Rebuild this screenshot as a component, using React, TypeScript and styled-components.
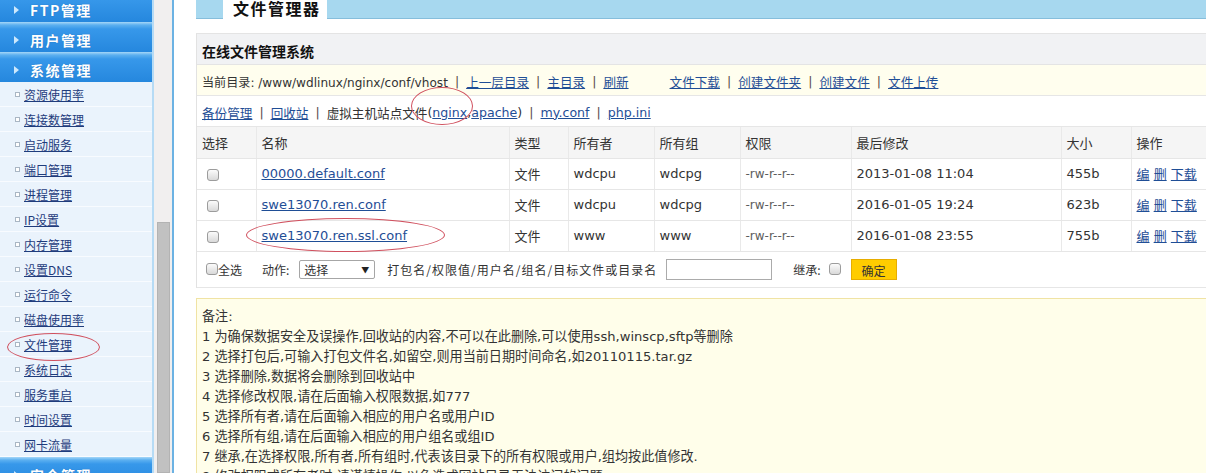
import React from "react";
import styled, { createGlobalStyle, css } from "styled-components";

const FONT = `"DejaVu Sans", "Noto Sans CJK SC", sans-serif`;
const CJK = `"Noto Sans CJK SC", sans-serif`;

const GlobalStyle = createGlobalStyle`
  html, body { margin: 0; padding: 0; height: 473px; overflow: hidden; background: #fff; }
  body { font-family: ${FONT}; font-size: 12px; color: #333; }
  * { box-sizing: border-box; }
`;

const Page = styled.div`
  display: flex;
  align-items: flex-start;
  height: 473px;
  overflow: hidden;
`;

/* ---------- sidebar ---------- */
const Sidebar = styled.nav`
  width: 154px;
  flex: none;
  margin-top: -8px;
  background: #eaf3fc;
  border-right: 2px solid #b6dbf5;
  display: flex;
  flex-direction: column;
`;

const MenuHeader = styled.div`
  height: 30px;
  padding: 6px 0 0 14px;
  display: flex;
  align-items: center;
  gap: 11px;
  background: linear-gradient(#a6d7f8 0, #5cb0f0 3px, #3798ea 7px, #2587de 100%);
  color: #fff;
  font: bold 14px ${CJK};
  letter-spacing: 1.5px;
  text-shadow: 0 0 1px rgba(0, 40, 100, 0.35);
`;

const Caret = styled.span`
  width: 0;
  height: 0;
  border-top: 4px solid transparent;
  border-bottom: 4px solid transparent;
  border-left: 5px solid #cde8fc;
`;

const SubItem = styled.div`
  position: relative;
  height: 25px;
  display: flex;
  align-items: center;
  gap: 4px;
  padding-left: 15px;
  border-bottom: 1px solid #f8fbff;
`;

const Bullet = styled.span`
  width: 5px;
  height: 5px;
  border: 1px solid #a9b6c4;
  background: #fff;
  flex: none;
`;

const SubLink = styled.a`
  color: #1f3c7c;
  text-decoration: underline;
  font: 12px ${CJK};
`;

const ScrollTrack = styled.div`
  width: 20px;
  height: 473px;
  flex: none;
  background: #f1efef;
  border-right: 2px solid #6bb2e3;
  padding: 0 2px 0 3px;
  display: flex;
  flex-direction: column;
`;

const Thumb = styled.div`
  margin-top: 222px;
  flex: 1;
  background: #c1c1c1;
  border: 1px solid #b3b3b3;
`;

/* ---------- main ---------- */
const Main = styled.main`
  flex: 1;
  min-width: 0;
  padding-left: 22px;
  display: flex;
  flex-direction: column;
  overflow: hidden;
`;

const TabBar = styled.div`
  height: 19px;
  background: #a7d8ef;
  border-bottom: 1px solid #86bedc;
  padding-left: 27px;
  display: flex;
  align-items: flex-start;
`;

const Tab = styled.div`
  width: 104px;
  height: 19px;
  background: #fff;
  padding-left: 10px;
  font: bold 16px/16px ${CJK};
  letter-spacing: 1.5px;
  color: #111;
`;

const Panel = styled.section`
  margin-top: 14px;
  width: 1050px;
  flex: none;
  border-left: 1px solid #e2e2e2;
  border-top: 1px solid #e4e4e4;
`;

const PanelTitle = styled.h2`
  margin: 0;
  height: 31px;
  padding: 4px 0 0 5px;
  display: flex;
  align-items: center;
  background: #f1f2f4;
  border-bottom: 1px solid #e4e4e4;
  font: bold 14px ${CJK};
  color: #111;
`;

const InfoRow = styled.div<{ $tone?: "note" | "plain" }>`
  height: 31px;
  padding: 2px 0 0 5px;
  display: flex;
  align-items: center;
  white-space: nowrap;
  font: 12.6px ${FONT};
  color: #333;
  border-bottom: 1px solid #e6e6e6;
  background: ${(p) => (p.$tone === "note" ? "#fffeee" : "#fff")};
`;

const PathText = styled.span`
  font-size: 12.1px;
`;

const Link = styled.a`
  color: #1f4e96;
  text-decoration: underline;
  cursor: pointer;
`;

const Sep = styled.span`
  margin: 0 7px;
  color: #5a4a4a;
`;

const LinkGroup = styled.span<{ $gap?: number }>`
  display: inline-flex;
  align-items: center;
  margin-left: ${(p) => p.$gap ?? 0}px;
`;

const Anchor = styled.span`
  position: relative;
  display: inline-block;
`;

const Ring = styled.span<{ $l: number; $t: number; $w: number; $h: number }>`
  position: absolute;
  left: ${(p) => p.$l}px;
  top: ${(p) => p.$t}px;
  width: ${(p) => p.$w}px;
  height: ${(p) => p.$h}px;
  border: 1px solid #d0505e;
  border-radius: 50%;
  pointer-events: none;
`;

const FileTable = styled.table`
  border-collapse: collapse;
  table-layout: fixed;
  width: 1049px;
  font: 13px ${FONT};
  color: #333;
`;

const cellBase = css`
  height: 31px;
  padding: 0 0 0 5px;
  text-align: left;
  white-space: nowrap;
  border-bottom: 1px solid #e6e6e6;
  & + & {
    border-left: 1px solid #e9e9e9;
  }
`;

const HeadCell = styled.th`
  ${cellBase};
  font-weight: normal;
  font-family: ${CJK};
  background: #f5f5f5;
`;

const Cell = styled.td<{ $muted?: boolean }>`
  ${cellBase};
  ${(p) =>
    p.$muted &&
    css`
      color: #5c5c5c;
      font-size: 12px;
    `}
`;

const Check = styled.input.attrs({ type: "checkbox" })<{ $ml?: number }>`
  appearance: none;
  width: 12px;
  height: 12px;
  margin: 0 0 0 ${(p) => p.$ml ?? 5}px;
  border: 1px solid #9c9c9c;
  border-radius: 3px;
  background: linear-gradient(#fbfbfb, #d9d9d9);
  vertical-align: middle;
  flex: none;
`;

const ActionBar = styled.div`
  height: 36px;
  padding-left: 4px;
  display: flex;
  align-items: center;
  white-space: nowrap;
  font: 12px ${CJK};
  color: #333;
  border-bottom: 1px solid #e6e6e6;
`;

const Label = styled.span<{ $ml?: number; $spaced?: boolean }>`
  margin-left: ${(p) => p.$ml ?? 0}px;
  letter-spacing: ${(p) => (p.$spaced ? "1px" : "0")};
`;

const SelectBox = styled.div`
  margin-left: 10px;
  width: 76px;
  height: 19px;
  border: 1px solid #a6a6a6;
  border-radius: 2px;
  display: flex;
  align-items: center;
  justify-content: space-between;
  padding: 0 5px 0 4px;
  background: #fff;
  font: 12px ${CJK};
`;

const SelectArrow = styled.span`
  font-size: 8px;
  color: #222;
`;

const TextInput = styled.input.attrs({ type: "text" })`
  margin-left: 9px;
  width: 106px;
  height: 21px;
  border: 1px solid #ababab;
  padding: 0 4px;
`;

const OkButton = styled.button`
  margin-left: 10px;
  width: 46px;
  height: 21px;
  border: 1px solid #e7ad00;
  background: #ffcc00;
  color: #333;
  font: 12px ${CJK};
  padding: 2px 0 0;
`;

const Notes = styled.div`
  margin-top: 10px;
  width: 1050px;
  flex: none;
  border: 1px solid #f0e3a4;
  background: #fffeea;
  padding: 8px 0 0 5px;
  font: 13.1px/20px ${FONT};
  color: #333;
  white-space: nowrap;
`;

const NoteLine = styled.div``;

/* ---------- data ---------- */
const subItems = [
  "资源使用率",
  "连接数管理",
  "启动服务",
  "端口管理",
  "进程管理",
  "IP设置",
  "内存管理",
  "设置DNS",
  "运行命令",
  "磁盘使用率",
  "文件管理",
  "系统日志",
  "服务重启",
  "时间设置",
  "网卡流量",
];

const columns: [string, number][] = [
  ["选择", 59],
  ["名称", 253],
  ["类型", 59],
  ["所有者", 86],
  ["所有组", 86],
  ["权限", 111],
  ["最后修改", 210],
  ["大小", 70],
  ["操作", 115],
];

const files = [
  { name: "00000.default.conf", owner: "wdcpu", group: "wdcpg", date: "2013-01-08 11:04", size: "455b" },
  { name: "swe13070.ren.conf", owner: "wdcpu", group: "wdcpg", date: "2016-01-05 19:24", size: "623b" },
  { name: "swe13070.ren.ssl.conf", owner: "www", group: "www", date: "2016-01-08 23:55", size: "755b", ring: true },
];

const notes = [
  "备注:",
  "1 为确保数据安全及误操作,回收站的内容,不可以在此删除,可以使用ssh,winscp,sftp等删除",
  "2 选择打包后,可输入打包文件名,如留空,则用当前日期时间命名,如20110115.tar.gz",
  "3 选择删除,数据将会删除到回收站中",
  "4 选择修改权限,请在后面输入权限数据,如777",
  "5 选择所有者,请在后面输入相应的用户名或用户ID",
  "6 选择所有组,请在后面输入相应的用户组名或组ID",
  "7 继承,在选择权限,所有者,所有组时,代表该目录下的所有权限或用户,组均按此值修改.",
  "8 修改权限或所有者时,请谨慎操作,以免造成网站目录无法访问的问题",
];

export default function App() {
  return (
    <>
      <GlobalStyle />
      <Page>
        <Sidebar>
          {["FTP管理", "用户管理", "系统管理"].map((h) => (
            <MenuHeader key={h}>
              <Caret />
              {h}
            </MenuHeader>
          ))}
          {subItems.map((s) => (
            <SubItem key={s}>
              <Bullet />
              <SubLink>{s}</SubLink>
              {s === "文件管理" && <Ring $l={7} $t={1} $w={93} $h={28} />}
            </SubItem>
          ))}
          <MenuHeader>
            <Caret />
            安全管理
          </MenuHeader>
        </Sidebar>
        <ScrollTrack>
          <Thumb />
        </ScrollTrack>
        <Main>
          <TabBar>
            <Tab>文件管理器</Tab>
          </TabBar>
          <Panel>
            <PanelTitle>在线文件管理系统</PanelTitle>
            <InfoRow $tone="note">
              <PathText>当前目录: /www/wdlinux/nginx/conf/vhost</PathText>
              <Sep>|</Sep>
              <Link>上一层目录</Link>
              <Sep>|</Sep>
              <Link>主目录</Link>
              <Sep>|</Sep>
              <Link>刷新</Link>
              <LinkGroup $gap={41}>
                <Link>文件下载</Link>
                <Sep>|</Sep>
                <Link>创建文件夹</Link>
                <Sep>|</Sep>
                <Link>创建文件</Link>
                <Sep>|</Sep>
                <Link>文件上传</Link>
              </LinkGroup>
            </InfoRow>
            <InfoRow>
              <Link>备份管理</Link>
              <Sep>|</Sep>
              <Link>回收站</Link>
              <Sep>|</Sep>
              <span>虚拟主机站点文件</span>
              <Anchor>
                (<Link>nginx</Link>,
                <Ring $l={-16} $t={-18} $w={62} $h={38} />
              </Anchor>
              <Link>apache</Link>)
              <Sep>|</Sep>
              <Link>my.conf</Link>
              <Sep>|</Sep>
              <Link>php.ini</Link>
            </InfoRow>
            <FileTable>
              <colgroup>
                {columns.map(([c, w]) => (
                  <col key={c} style={{ width: w }} />
                ))}
              </colgroup>
              <thead>
                <tr>
                  {columns.map(([c]) => (
                    <HeadCell key={c}>{c}</HeadCell>
                  ))}
                </tr>
              </thead>
              <tbody>
                {files.map((f) => (
                  <tr key={f.name}>
                    <Cell>
                      <Check />
                    </Cell>
                    <Cell>
                      <Anchor>
                        <Link>{f.name}</Link>
                        {f.ring && <Ring $l={-16} $t={-10} $w={199} $h={34} />}
                      </Anchor>
                    </Cell>
                    <Cell>文件</Cell>
                    <Cell>{f.owner}</Cell>
                    <Cell>{f.group}</Cell>
                    <Cell $muted>-rw-r--r--</Cell>
                    <Cell>{f.date}</Cell>
                    <Cell>{f.size}</Cell>
                    <Cell>
                      <Link>编</Link> <Link>删</Link> <Link>下载</Link>
                    </Cell>
                  </tr>
                ))}
              </tbody>
            </FileTable>
            <ActionBar>
              <Check />
              <Label>全选</Label>
              <Label $ml={20}>动作:</Label>
              <SelectBox>
                <span>选择</span>
                <SelectArrow>▼</SelectArrow>
              </SelectBox>
              <Label $ml={12} $spaced>
                打包名/权限值/用户名/组名/目标文件或目录名
              </Label>
              <TextInput />
              <Label $ml={21}>继承:</Label>
              <Check $ml={8} />
              <OkButton>确定</OkButton>
            </ActionBar>
          </Panel>
          <Notes>
            {notes.map((n) => (
              <NoteLine key={n}>{n}</NoteLine>
            ))}
          </Notes>
        </Main>
      </Page>
    </>
  );
}
